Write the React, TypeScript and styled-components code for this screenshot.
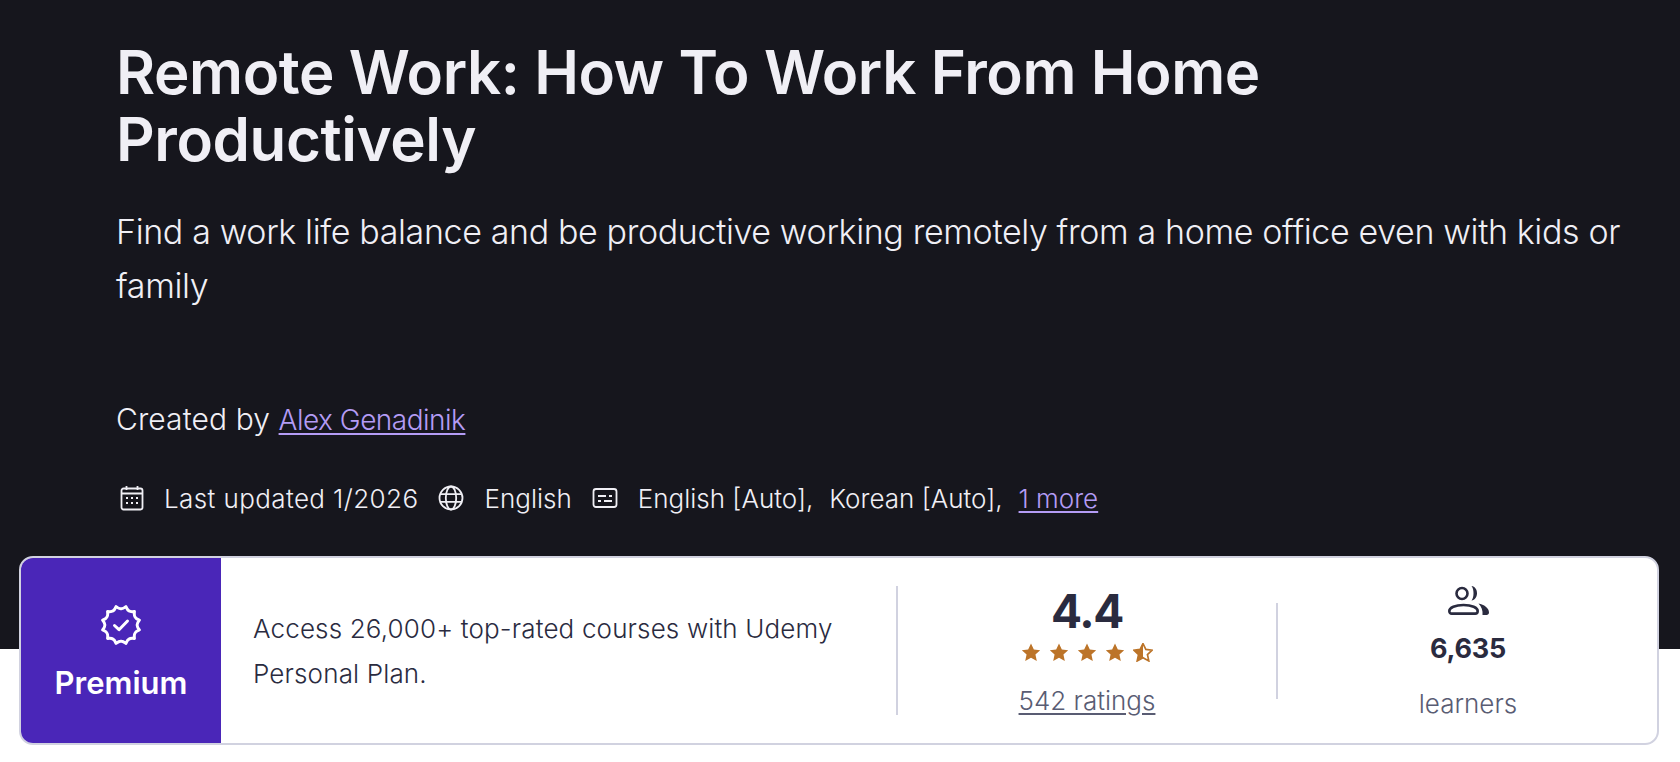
import React from 'react';
import styled, { createGlobalStyle } from 'styled-components';

const GlobalStyle = createGlobalStyle`
    html, body {
        margin: 0;
        background: #fff;
        font-family: Inter, "Noto Sans", sans-serif;
    }
`;

const Page = styled.div`
    width: 1680px;
    height: 762px;
    overflow: hidden;
`;

const Hero = styled.header`
    height: 649px;
    box-sizing: border-box;
    padding: 39px 0 0 116px;
    background: #16161d;
    color: #f0eff5;
`;

const Title = styled.h1`
    margin: 0 0 32px;
    width: 1300px;
    font-size: 60px;
    line-height: 67px;
    font-weight: 600;
    letter-spacing: -0.4px;
`;

const Subtitle = styled.p`
    margin: 0 0 86px;
    width: 1540px;
    font-size: 34px;
    line-height: 54px;
    font-weight: 300;
    letter-spacing: -0.37px;
`;

const Creator = styled.div`
    font-size: 30px;
    line-height: 40px;
    font-weight: 300;
    letter-spacing: 0.1px;
    margin-bottom: 38px;
`;

const HeroLink = styled.a`
    color: #b49cf5;
    text-decoration: underline;
    text-underline-offset: 3px;
`;

const CreatorLink = styled(HeroLink)`
    font-size: 28px;
    letter-spacing: -0.5px;
`;

const Meta = styled.div`
    display: flex;
    align-items: center;
    height: 40px;
    padding-left: 4px;
    font-size: 26px;
    font-weight: 300;
`;

const MetaItem = styled.span`
    display: flex;
    align-items: center;
    gap: 20px;
    margin-right: 20px;
    white-space: pre;

    svg {
        flex: none;
    }
`;

const MetaText = styled.span<{ $tracking?: number }>`
    letter-spacing: ${p => p.$tracking ?? 0}px;
`;

const CaptionPart = styled.span`
    margin-right: 16px;
`;

const Card = styled.section`
    display: flex;
    box-sizing: border-box;
    width: 1640px;
    height: 189px;
    margin: -93px 0 0 19px;
    position: relative;
    border: 2px solid #d1d2e0;
    border-radius: 14px;
    background: #fff;
    overflow: hidden;
    color: #2a2b3f;
`;

const PremiumTag = styled.div`
    flex: none;
    width: 200px;
    display: flex;
    flex-direction: column;
    align-items: center;
    padding-top: 47px;
    box-sizing: border-box;
    background: #4a26b8;
    color: #fff;
    font-size: 31px;
    line-height: 40px;
    font-weight: 600;
    gap: 18px;
`;

const PlanText = styled.p`
    flex: none;
    width: 675px;
    box-sizing: border-box;
    margin: 0;
    padding: 48px 0 0 32px;
    font-size: 26px;
    line-height: 45px;
    font-weight: 300;
    letter-spacing: 0.15px;
`;

const Stat = styled.div<{ $width: number }>`
    flex: none;
    width: ${p => p.$width}px;
    display: flex;
    flex-direction: column;
    align-items: center;
    align-self: flex-start;
    border-left: 2px solid #d1d2e0;
    box-sizing: border-box;
`;

const RatingStat = styled(Stat)`
    height: 129px;
    margin-top: 28px;
`;

const LearnerStat = styled(Stat)`
    height: 96px;
    margin-top: 45px;
`;

const RatingValue = styled.div`
    font-size: 46px;
    line-height: 50px;
    font-weight: 700;
    letter-spacing: -1.4px;
`;

const Stars = styled.div`
    display: flex;
    gap: 8px;
    margin: 7px 0 21px;
`;

const RatingsLink = styled.a`
    color: #595c73;
    font-size: 26px;
    line-height: 36px;
    font-weight: 300;
    text-decoration: underline;
    text-underline-offset: 3px;
`;

const LearnerIcon = styled.div`
    height: 29px;
    margin-top: -17px;
`;

const LearnerCount = styled.div`
    font-size: 27px;
    line-height: 34px;
    font-weight: 700;
    letter-spacing: -0.2px;
    margin: 17px 0 20px;
`;

const LearnerLabel = styled.div`
    color: #595c73;
    font-size: 26px;
    line-height: 36px;
    font-weight: 300;
`;

// scalloped badge outline, 12 bumps joined by rounded valleys
const badgePath = (() => {
    const at = (radius: number, step: number) => {
        const angle = (step * Math.PI) / 12 - Math.PI / 2 + Math.PI / 12;
        return `${(20 + radius * Math.cos(angle)).toFixed(2)} ${(20 + radius * Math.sin(angle)).toFixed(2)}`;
    };
    let d = `M${at(19, 0)}`;
    for (let i = 0; i < 24; i += 2) {
        d += `Q${at(16, i + 0.6)} ${at(16.2, i + 1)}Q${at(16, i + 1.4)} ${at(19, i + 2)}`;
    }
    return `${d}Z`;
})();

const BadgeIcon = () => (
    <svg width="40" height="40" viewBox="0 0 40 40" fill="none" stroke="#fff" strokeWidth="3" strokeLinejoin="round">
        <path d={badgePath} />
        <path d="M13.500 20.500l4.500 4.200 8.500-8.700" strokeLinecap="round" />
    </svg>
);

const CalendarIcon = () => (
    <svg width="24" height="26" viewBox="0 0 24 26" fill="none" stroke="#f0eff5" strokeWidth="1.8">
        <rect x="1.500" y="3.500" width="21" height="21" rx="2" />
        <path d="M1.500 8.500h21M6.500 1v4M17.500 1v4" />
        <path d="M6 13h2M11 13h2M16 13h2M6 18h2M11 18h2M16 18h2" />
    </svg>
);

const GlobeIcon = () => (
    <svg width="26" height="26" viewBox="0 0 26 26" fill="none" stroke="#f0eff5" strokeWidth="1.8">
        <circle cx="13" cy="13" r="11.500" />
        <ellipse cx="13" cy="13" rx="5.200" ry="11.500" />
        <path d="M2 9.200h22M2 16.800h22" />
    </svg>
);

const CaptionsIcon = () => (
    <svg width="26" height="22" viewBox="0 0 26 22" fill="none" stroke="#f0eff5" strokeWidth="1.8">
        <rect x="1.500" y="2" width="23" height="18" rx="2.500" />
        <path d="M6 9h8M17 9h3M6 14h3M12 14h8" />
    </svg>
);

const PeopleIcon = () => (
    <svg width="41" height="29" viewBox="0 0 41 29" fill="none">
        <circle cx="14" cy="7.500" r="5.500" stroke="#2a2b3f" strokeWidth="2.600" />
        <path
            d="M1.300 25c0-3.500 6-6 14.200-6s14.200 2.500 14.200 6c0 1.500-.8 2.600-2.500 2.600H3.800c-1.700 0-2.500-1.100-2.500-2.600Z"
            stroke="#2a2b3f"
            strokeWidth="2.600"
        />
        <path d="M23.500 0c3.500.5 5.500 3.500 5.500 7.200s-2 6.700-5.500 7.300c1.500-2 2-4.500 2-7.300s-.5-5.200-2-7.200Z" fill="#2a2b3f" />
        <path d="M30.500 17.500c5.500 1 10.500 4.500 10.500 9 0 1.500-1 2.500-2.500 2.500h-4c.5-4.500-1-8.500-4-11.500Z" fill="#2a2b3f" />
    </svg>
);

const starShape = 'M9 .5l2.700 5.600 6 .7-4.500 4.100 1.300 6.100L9 14l-5.500 3 1.300-6.100L.3 6.800l6-.7Z';

const Star = ({ half }: { half?: boolean }) => (
    <svg width="20" height="19" viewBox="0 0 18 18">
        <path d={starShape} fill={half ? 'none' : '#bc7429'} stroke="#bc7429" strokeWidth={half ? 1.6 : 0} />
        {half && <path d="M9 .5V14l-5.500 3 1.300-6.100L.3 6.800l6-.7Z" fill="#bc7429" />}
    </svg>
);

export default function App() {
    return (
        <Page>
            <GlobalStyle />
            <Hero>
                <Title>Remote Work: How To Work From Home Productively</Title>
                <Subtitle>
                    Find a work life balance and be productive working remotely from a home office even with kids or family
                </Subtitle>
                <Creator>
                    Created by <CreatorLink href="#">Alex Genadinik</CreatorLink>
                </Creator>
                <Meta>
                    <MetaItem>
                        <CalendarIcon />
                        <MetaText $tracking={0.4}>Last updated 1/2026</MetaText>
                    </MetaItem>
                    <MetaItem>
                        <GlobeIcon />
                        <MetaText>English</MetaText>
                    </MetaItem>
                    <MetaItem>
                        <CaptionsIcon />
                        <span>
                            <CaptionPart>English [Auto],</CaptionPart>
                            <CaptionPart>Korean [Auto],</CaptionPart>
                            <HeroLink href="#">1 more</HeroLink>
                        </span>
                    </MetaItem>
                </Meta>
            </Hero>
            <Card>
                <PremiumTag>
                    <BadgeIcon />
                    Premium
                </PremiumTag>
                <PlanText>Access 26,000+ top-rated courses with Udemy Personal Plan.</PlanText>
                <RatingStat $width={380}>
                    <RatingValue>4.4</RatingValue>
                    <Stars>
                        <Star />
                        <Star />
                        <Star />
                        <Star />
                        <Star half />
                    </Stars>
                    <RatingsLink href="#">542 ratings</RatingsLink>
                </RatingStat>
                <LearnerStat $width={382}>
                    <LearnerIcon>
                        <PeopleIcon />
                    </LearnerIcon>
                    <LearnerCount>6,635</LearnerCount>
                    <LearnerLabel>learners</LearnerLabel>
                </LearnerStat>
            </Card>
        </Page>
    );
}
